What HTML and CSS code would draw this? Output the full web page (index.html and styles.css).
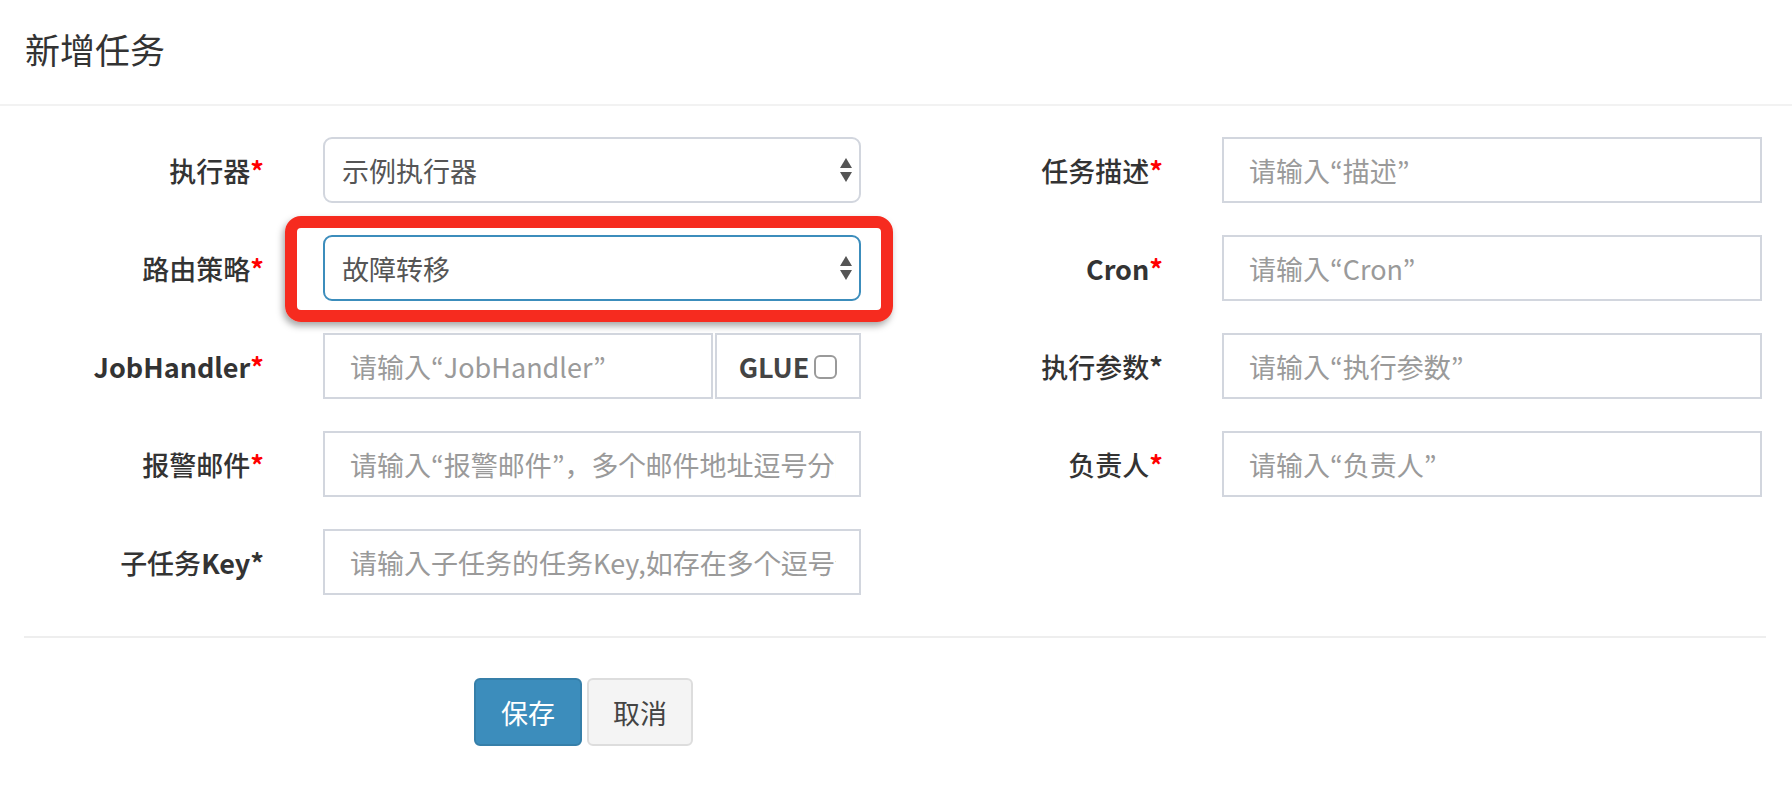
FILE: index.html
```html
<!DOCTYPE html>
<html>
<head>
<meta charset="utf-8">
<title>新增任务</title>
<link rel="stylesheet" href="styles.css">
</head>
<body>
<div class="modal">
  <div class="modal-header">
    <h4 class="modal-title">新增任务</h4>
  </div>
  <form class="form">
    <div class="grid">
      <label class="lbl">执行器<span class="req">*</span></label>
      <div class="sel-wrap">
        <select class="select"><option>示例执行器</option></select>
        <svg class="arrows" width="12" height="24" viewBox="0 0 12 24"><polygon points="0,10 6,0 12,10" fill="#555"/><polygon points="0,14 12,14 6,24" fill="#555"/></svg>
      </div>
      <label class="lbl">任务描述<span class="req">*</span></label>
      <input class="input" type="text" placeholder="请输入“描述”">

      <label class="lbl">路由策略<span class="req">*</span></label>
      <div class="sel-wrap">
        <select class="select focused"><option>故障转移</option></select>
        <svg class="arrows" width="12" height="24" viewBox="0 0 12 24"><polygon points="0,10 6,0 12,10" fill="#555"/><polygon points="0,14 12,14 6,24" fill="#555"/></svg>
        <div class="highlight"></div>
      </div>
      <label class="lbl"><span class="lat">Cron</span><span class="req">*</span></label>
      <input class="input" type="text" placeholder="请输入“Cron”">

      <label class="lbl"><span class="lat">JobHandler</span><span class="req">*</span></label>
      <div class="group">
        <input class="input group-input" type="text" placeholder="请输入“JobHandler”">
        <span class="addon">GLUE<span class="check"></span></span>
      </div>
      <label class="lbl">执行参数<span class="req black">*</span></label>
      <input class="input" type="text" placeholder="请输入“执行参数”">

      <label class="lbl">报警邮件<span class="req">*</span></label>
      <input class="input" type="text" placeholder="请输入“报警邮件”，多个邮件地址逗号分隔">
      <label class="lbl">负责人<span class="req">*</span></label>
      <input class="input" type="text" placeholder="请输入“负责人”">

      <label class="lbl">子任务<span class="lat">Key</span><span class="req black">*</span></label>
      <input class="input" type="text" placeholder="请输入子任务的任务Key,如存在多个逗号分隔">
    </div>
    <hr class="divider">
    <div class="actions">
      <button type="button" class="btn btn-primary">保存</button>
      <button type="button" class="btn btn-default">取消</button>
    </div>
  </form>
</div>
</body>
</html>
```

FILE: styles.css
```css
* { box-sizing: border-box; }
html, body { margin: 0; padding: 0; background: #fff; }
body {
  font-family: "Noto Sans CJK SC", "Noto Sans", sans-serif;
  font-size: 27px;
  color: #333;
}
.modal { width: 1792px; }
.modal-header {
  padding: 24px 25px 30px;
  border-bottom: 2px solid #f2f2f2;
}
.modal-title {
  margin: 0;
  font-size: 35px;
  font-weight: 400;
  line-height: 50px;
  color: #333;
}
.grid {
  display: grid;
  grid-template-columns: 264px 538px 243px 540px;
  column-gap: 59px;
  row-gap: 32px;
  grid-auto-rows: 66px;
  padding-top: 31px;
}
.lbl {
  display: flex;
  align-items: center;
  justify-content: flex-end;
  font-weight: 500;
  font-size: 27px;
  color: #333;
  white-space: nowrap;
}
.lat { font-weight: 700; }
.req { color: #f00; font-weight: 700; }
.req.black { color: #333; }
.input {
  width: 100%;
  height: 66px;
  border: 2px solid #d2d6de;
  border-radius: 0;
  padding: 0 23px 0 25px;
  font-family: "Noto Sans CJK JP", "Noto Sans CJK SC", sans-serif;
  font-size: 27px;
  color: #555;
  background: #fff;
  outline: none;
}
.input::placeholder { color: #9a9a9a; }
.sel-wrap { position: relative; }
.select {
  -webkit-appearance: none;
  appearance: none;
  width: 100%;
  height: 66px;
  border: 2px solid #d2d6de;
  border-radius: 9px;
  padding: 0 40px 0 17px;
  font-family: inherit;
  font-size: 27px;
  color: #555;
  background: #fff;
  outline: none;
}
.select.focused { border-color: #3c8dbc; }
.arrows {
  position: absolute;
  right: 9px;
  top: 21px;
  pointer-events: none;
}
.highlight {
  position: absolute;
  left: -38px;
  right: -32px;
  top: -19px;
  bottom: -21px;
  border: 12px solid #f62b1f;
  border-radius: 16px;
  box-shadow: -2px 4px 7px rgba(0, 0, 0, 0.35);
  pointer-events: none;
}
.group { display: flex; }
.group-input { flex: 1; width: auto; min-width: 0; }
.addon {
  width: 146px;
  margin-left: 2px;
  height: 66px;
  border: 2px solid #d2d6de;
  display: flex;
  align-items: center;
  justify-content: center;
  font-weight: 700;
  font-size: 27px;
  color: #444;
  gap: 5px;
}
.check {
  width: 23px;
  height: 24px;
  border: 2px solid #9a9a9a;
  border-radius: 6px;
  background: #fff;
  margin-top: 2px;
}
.divider {
  margin: 41px 26px 0 24px;
  border: 0;
  border-top: 2px solid #eee;
  height: 0;
}
.actions {
  display: flex;
  gap: 5px;
  padding: 40px 0 0 474px;
}
.btn {
  height: 68px;
  padding: 0 24px;
  font-family: inherit;
  font-size: 27px;
  border-radius: 6px;
  border: 2px solid transparent;
  cursor: pointer;
}
.btn-primary {
  width: 108px;
  background: #3c8dbc;
  border-color: #367fa9;
  color: #fff;
}
.btn-default {
  width: 106px;
  background: #f4f4f4;
  border-color: #ddd;
  color: #444;
}
```
